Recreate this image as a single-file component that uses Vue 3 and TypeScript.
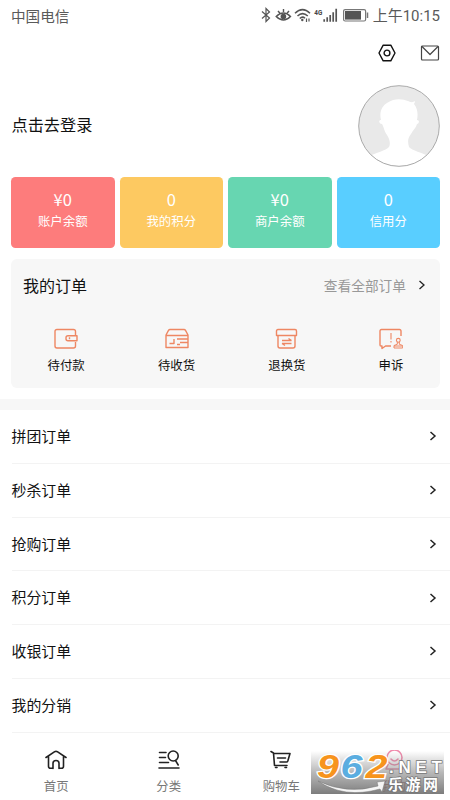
<script setup lang="ts">
interface Balance { value: string; label: string; tone: string }
const balances: Balance[] = [
  { value: '¥0', label: '账户余额', tone: 'red' },
  { value: '0', label: '我的积分', tone: 'yellow' },
  { value: '¥0', label: '商户余额', tone: 'green' },
  { value: '0', label: '信用分', tone: 'blue' },
]
const rows: string[] = ['拼团订单', '秒杀订单', '抢购订单', '积分订单', '收银订单', '我的分销']
</script>

<template>
  <div class="page">
    <header class="status">
      <span class="carrier">中国电信</span>
      <svg class="signals" width="110" height="20" viewBox="0 0 110 20" fill="none" stroke="#555" stroke-width="1.2">
        <path d="M2 5.500 9.500 12 6 15.500V2.500L9.500 6 2 12.500" />
        <path d="M16.200 10.500Q23.500 3.500 30.500 10.500Q23.500 17.500 16.200 10.500ZM18 5l2 2.300M23.500 3v3M29 5l-2 2.300" stroke-width="1.400" />
        <circle cx="23.400" cy="10.500" r="2.800" fill="#555" stroke="none" />
        <path d="M35 7.300Q42.500 0 50 7.300M37.500 10Q42.500 5.200 47.800 10M39.800 12.500Q42.500 9.900 45 12.200" stroke-width="1.500" />
        <circle cx="42.300" cy="14" r="1.200" fill="#555" stroke="none" />
        <path d="M46.500 12.500v3.500M49 12.500v3" />
        <path d="M64.200 13.200v2.500M67.200 11.200v4.500M70.200 9v6.700M73.200 6.200v9.500M76.200 2.800v12.900" stroke="#555" stroke-width="1.700" />
        <text x="54.300" y="8.600" class="net" textLength="8" lengthAdjust="spacingAndGlyphs" stroke="none" fill="#444">4G</text>
        <rect x="83.600" y="3.600" width="22" height="11.400" rx="1.500" stroke="#777" />
        <rect x="85" y="5" width="16" height="8.600" fill="#555" stroke="none" />
        <path d="M107.500 6.500v5.500" stroke="#777" stroke-width="1.500" />
      </svg>
      <span class="time">上午10:15</span>
    </header>

    <div class="tools">
      <svg width="18" height="18" viewBox="0 0 18 18" fill="none" stroke="#111" stroke-width="1.400" stroke-linejoin="round">
        <path d="M5.200 1.200h7.600L17 9l-4.200 7.800H5.200L1 9Z" /><circle cx="9" cy="9" r="2.900" />
      </svg>
      <svg width="20" height="16" viewBox="0 0 20 16" fill="none" stroke="#444" stroke-width="1.200" stroke-linejoin="round">
        <rect x="1.500" y="1" width="17" height="14" rx="1" /><path d="m2 1.500 8 8 8-8" />
      </svg>
    </div>

    <section class="profile">
      <span class="login">点击去登录</span>
      <svg width="82" height="82" viewBox="0 0 82 82">
        <defs><clipPath id="disc"><circle cx="41" cy="41" r="40" /></clipPath></defs>
        <circle cx="41" cy="41" r="40.300" fill="#e9e9e9" />
        <path clip-path="url(#disc)" fill="#fff" d="M10 72C18 67 28 66 31 62C33 58 31 53 29 50C26 46 26 42 24 39C21 39 20 35 23 35C21 27 24 21 29 18C38 12 46 15 50 16C54 18 55 17 57 16C57 18 56 18 56 19C60 24 60 30 59 35C62 35 61 39 59 39C58 43 55 45 53 49C49 54 50 58 51 62C54 66 64 67 72 72V82H10Z" />
        <circle cx="41" cy="41" r="40.300" fill="none" stroke="#aaa" stroke-width="1" />
      </svg>
    </section>

    <section class="balances">
      <div v-for="b in balances" :key="b.label" class="balance" :class="b.tone">
        <strong>{{ b.value }}</strong><span>{{ b.label }}</span>
      </div>
    </section>

    <section class="orders">
      <div class="orders-head">
        <h2>我的订单</h2>
        <span class="all">查看全部订单</span>
        <svg width="8" height="12" viewBox="0 0 8 12" fill="none" stroke="#222" stroke-width="1.300"><path d="m1.500 2 4.500 4-4.500 4" /></svg>
      </div>
      <div class="order-types">
        <div class="type">
          <svg width="24" height="22" viewBox="0 0 24 22"><path d="M21.500 7V3.500Q21.500 1.500 19.500 1.500H3Q1 1.500 1 3.500v14.500Q1 20 3 20h16.500q2 0 2-2v-4M14 7.700h9v5h-9q-2 0-2-2v-1q0-2 2-2ZM15.500 9.200v2" /></svg>
          <span>待付款</span>
        </div>
        <div class="type">
          <svg width="24" height="22" viewBox="0 0 24 22"><path d="M1 7 3.500 2.300Q4 1.500 5 1.500h14q1 0 1.500.8L23 7v12.500H1ZM1 7.500h22M9 11v4.500H4.500M23 11H12M23 14.500H15M15 16.500h-3" /></svg>
          <span>待收货</span>
        </div>
        <div class="type">
          <svg width="24" height="22" viewBox="0 0 24 22"><path d="M3 1.500h17q1.500 0 1.500 1.500v4.500h-20V3Q1.500 1.500 3 1.500ZM3 8v10q0 2 2 2h13q2 0 2-2V8M16.500 12.500H7M13.500 10.500l3 2M7 15.500h9.500M7 15.500l3 2" /></svg>
          <span>退换货</span>
        </div>
        <div class="type">
          <svg width="24" height="22" viewBox="0 0 24 22"><path d="M22 8V3Q22 1.500 20.500 1.500H2.500Q1 1.500 1 3v14q0 1 1 1h1v2.500L6.500 18H12" /><path d="M12 5v6.500M12 13v1.500" stroke-width="1.100" /><circle cx="19.300" cy="12.300" r="1.900" stroke-width="1.100" /><path d="M18.300 14v2.300l-3.300 1.200v2.500h8.700v-2.500l-3.400-1.200V14M15 18h8.500" stroke-width="1" /></svg>
          <span>申诉</span>
        </div>
      </div>
    </section>

    <nav class="menu">
      <div v-for="row in rows" :key="row" class="row">
        <span>{{ row }}</span>
        <svg width="8" height="12" viewBox="0 0 8 12" fill="none" stroke="#222" stroke-width="1.500"><path d="m1.500 2 4.500 4-4.500 4" /></svg>
      </div>
    </nav>

    <footer class="tabs">
      <div class="tab">
        <svg width="22" height="20" viewBox="0 0 22 20"><path d="M1 7.500 9.700 1.700q1.300-.8 2.600 0L21 7.500M3.500 6.500v9.800q0 2 2 2h1.500M18.500 6.500v9.800q0 2-2 2H15M8 18.500v-5.300q0-2.700 3-2.700t3 2.700v5.300" /></svg>
        <span>首页</span>
      </div>
      <div class="tab">
        <svg width="22" height="20" viewBox="0 0 22 20"><path d="M1.500 2.500h6.500M1.500 7.500h6M1.500 12.500h9M1 18h20M17.500 10.500l2.700 4.500" /><circle cx="15.200" cy="6" r="5" /></svg>
        <span>分类</span>
      </div>
      <div class="tab">
        <svg width="22" height="20" viewBox="0 0 22 20"><path d="M1 1.500 3.500 3l1 12.500h12.500M3.500 3.500h16.500l-2.200 7.500q-.4 1-1.300 1H10M7.500 8h8M5.500 17.500h1.500M15 17.500h1.500" /></svg>
        <span>购物车</span>
      </div>
      <div class="tab mine">
        <svg width="22" height="20" viewBox="0 0 22 20"><circle cx="11.500" cy="7.500" r="7.500" /><path d="M8 9q3.500 4 7 0M5 14.500 3 19h17l-2-4.500" /></svg>
        <span>我的</span>
      </div>
    </footer>

    <svg class="watermark" width="133" height="43" viewBox="0 0 133 43">
      <defs>
        <linearGradient id="shade" x2="0" y2="1"><stop offset="0" stop-color="#888" stop-opacity="0" /><stop offset=".5" stop-color="#888" stop-opacity=".6" /><stop offset="1" stop-color="#777" stop-opacity=".96" /></linearGradient>
      </defs>
      <rect width="133" height="43" fill="url(#shade)" />
      <path d="M7 30Q36 44 67 35L66 31 74 30 71 41 69 38Q33 48 7 30Z" fill="#f5f5f5" stroke="#777" stroke-width=".5" />
      <g class="digits">
        <text x="6" y="27" textLength="22" lengthAdjust="spacingAndGlyphs" fill="#f7941d">9</text>
        <text x="29.500" y="27" textLength="22" lengthAdjust="spacingAndGlyphs" fill="#5aade0">6</text>
        <text x="54.500" y="27" textLength="22" lengthAdjust="spacingAndGlyphs" fill="#f7941d">2</text>
      </g>
      <text class="net-name" x="78" y="21.500" textLength="53">.NET</text>
      <text class="site" x="77" y="39" textLength="50">乐游网</text>
    </svg>
  </div>
</template>

<style>
body { background: #fff; }
</style>

<style scoped>
.page { position: relative; box-sizing: border-box; width: 450px; height: 800px; overflow: hidden; display: flex; flex-direction: column; background: #fff; color: #111; font-family: "Noto Sans CJK SC", sans-serif; }
svg { display: block; flex: none; }
.status { height: 32px; display: flex; align-items: center; padding: 0 10px 0 11px; color: #5a5a5a; font-size: 14.6px; line-height: 20px; }
.carrier { padding-bottom: 1px; }
.signals { margin-left: auto; margin-right: 3px; }
.net { font: bold 7.500px Roboto, sans-serif; }
.time { font-family: Roboto, "Noto Sans CJK SC", sans-serif; font-size: 15px; white-space: nowrap; }
.tools { height: 42px; display: flex; justify-content: flex-end; align-items: center; gap: 24px; padding-right: 10px; }
.profile { height: 82px; margin-top: 11px; display: flex; justify-content: space-between; align-items: center; padding: 0 10px 0 11.500px; }
.login { font-size: 16.200px; padding-bottom: 4px; }
.balances { display: grid; grid-template-columns: repeat(4, 1fr); gap: 5px; height: 71px; margin: 9.500px 10px 0 11px; }
.balance { border-radius: 4.500px; display: flex; flex-direction: column; align-items: center; color: #fff; padding-top: 12.500px; box-sizing: border-box; }
.balance strong { font-weight: 400; font-size: 16.500px; line-height: 20px; }
.balance span { font-size: 12.400px; line-height: 18px; margin-top: 3px; }
.red { background: #fd7c7c; }
.yellow { background: #fdc961; }
.green { background: #67d6b1; }
.blue { background: #59ceff; }
.orders { height: 129px; margin: 11.500px 10px 0 11px; border-radius: 6px; background: #f7f7f7; }
.orders-head { display: flex; align-items: center; height: 52px; padding: 0 14px 0 12px; }
h2 { margin: 0 auto 0 0; font-size: 16px; font-weight: 400; padding-bottom: 1px; }
.all { font-size: 13.700px; color: #999; margin-right: 12px; }
.order-types { display: flex; justify-content: space-around; padding-top: 17px; }
.type { display: flex; flex-direction: column; align-items: center; }
.type svg { fill: none; stroke: #ee8763; stroke-width: 1.400; stroke-linejoin: round; }
.type span { font-size: 12.400px; line-height: 18px; margin-top: 6px; }
.menu { margin-top: 11px; border-top: 11px solid #f7f7f7; }
.row { box-sizing: border-box; height: 53.750px; display: flex; justify-content: space-between; align-items: center; margin-left: 11.500px; padding-right: 13px; border-bottom: 1.500px solid #f3f3f3; font-size: 14.900px; }
.row span { padding-bottom: 1.500px; }
.tabs { display: grid; grid-template-columns: repeat(4, 1fr); padding-top: 17.500px; }
.tab { display: flex; flex-direction: column; align-items: center; color: #777; font-size: 12.400px; line-height: 18px; gap: 6.500px; }
.tab svg { fill: none; stroke: #222; stroke-width: 1.600; stroke-linecap: round; stroke-linejoin: round; }
.tab.mine { color: #a44a40; }
.tab.mine svg { stroke: #f08bac; }
.watermark { position: absolute; left: 311px; top: 751px; overflow: visible; }
.digits { font: italic bold 34px "Liberation Sans", sans-serif; stroke: #fff; stroke-width: 2.500; paint-order: stroke; }
.net-name { font: bold 17px "Liberation Sans", sans-serif; fill: #fff; stroke: #777; stroke-width: 1.500; paint-order: stroke; }
.site { font: bold 15px "Noto Sans CJK SC", sans-serif; fill: #fff; stroke: #777; stroke-width: 1.500; paint-order: stroke; }
</style>
